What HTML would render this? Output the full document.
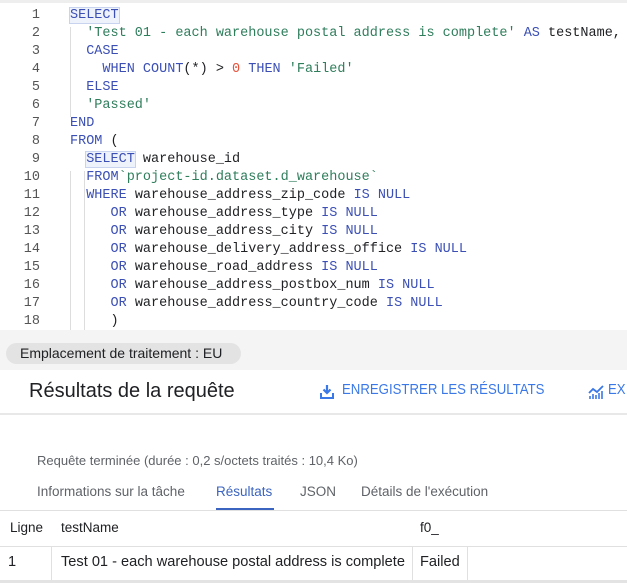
<!DOCTYPE html>
<html><head><meta charset="utf-8"><style>
*{margin:0;padding:0;box-sizing:border-box}
body{width:627px;height:583px;overflow:hidden;background:#fff;font-family:"Liberation Sans",sans-serif;position:relative}
.code{position:absolute;left:0;top:0;width:627px;height:330px;background:#fff;border-top:3px solid #eee}
.ln{position:absolute;left:0;width:40px;text-align:right;font:13.5px "Liberation Mono",monospace;color:#555}
.cl{position:absolute;left:70px;font:13.5px "Liberation Mono",monospace;color:#202124;white-space:pre}
.k{color:#3b4fb5}.s{color:#2e7d5b}.n{color:#e8513a}
.g{position:absolute;width:1px;background:#ddd}
.band{position:absolute;left:0;top:330px;width:627px;height:40px;background:#f4f4f5}
.chip{position:absolute;left:6px;top:343px;width:235px;height:21px;background:#e3e3e3;border-radius:11px;font-size:14px;color:#202124;padding:2px 0 0 14px}
.hdr{position:absolute;left:0;top:370px;width:627px;height:45px;border-bottom:2px solid #e8e8e8;background:#fff}
.sx{transform-origin:left center;white-space:nowrap}
#c{position:absolute;left:0;top:3px;width:627px;height:330px}
</style></head><body>
<div class="code">
<div class="g" style="left:70px;top:24px;height:90px"></div>
<div class="g" style="left:84px;top:168px;height:160px"></div>
<div class="g" style="left:70px;top:168px;height:160px"></div>
</div>
<div id="c">
<div class="ln" style="top:5px">1</div><div class="cl" style="top:5px"><span class="k" style="background:#eef2fb;outline:1px solid #c8d4ef">SELECT</span></div>
<div class="ln" style="top:23px">2</div><div class="cl" style="top:23px">  <span class="s">'Test 01 - each warehouse postal address is complete'</span> <span class="k">AS</span> testName,</div>
<div class="ln" style="top:41px">3</div><div class="cl" style="top:41px">  <span class="k">CASE</span></div>
<div class="ln" style="top:59px">4</div><div class="cl" style="top:59px">    <span class="k">WHEN COUNT</span>(*) &gt; <span class="n">0</span> <span class="k">THEN</span> <span class="s">'Failed'</span></div>
<div class="ln" style="top:77px">5</div><div class="cl" style="top:77px">  <span class="k">ELSE</span></div>
<div class="ln" style="top:95px">6</div><div class="cl" style="top:95px">  <span class="s">'Passed'</span></div>
<div class="ln" style="top:113px">7</div><div class="cl" style="top:113px"><span class="k">END</span></div>
<div class="ln" style="top:131px">8</div><div class="cl" style="top:131px"><span class="k">FROM</span> (</div>
<div class="ln" style="top:149px">9</div><div class="cl" style="top:149px">  <span class="k" style="outline:1px solid #c8d4ef;background:#eef2fb">SELECT</span> warehouse_id</div>
<div class="ln" style="top:167px">10</div><div class="cl" style="top:167px">  <span class="k">FROM</span><span class="s">`project-id.dataset.d_warehouse`</span></div>
<div class="ln" style="top:185px">11</div><div class="cl" style="top:185px">  <span class="k">WHERE</span> warehouse_address_zip_code <span class="k">IS NULL</span></div>
<div class="ln" style="top:203px">12</div><div class="cl" style="top:203px">     <span class="k">OR</span> warehouse_address_type <span class="k">IS NULL</span></div>
<div class="ln" style="top:221px">13</div><div class="cl" style="top:221px">     <span class="k">OR</span> warehouse_address_city <span class="k">IS NULL</span></div>
<div class="ln" style="top:239px">14</div><div class="cl" style="top:239px">     <span class="k">OR</span> warehouse_delivery_address_office <span class="k">IS NULL</span></div>
<div class="ln" style="top:257px">15</div><div class="cl" style="top:257px">     <span class="k">OR</span> warehouse_road_address <span class="k">IS NULL</span></div>
<div class="ln" style="top:275px">16</div><div class="cl" style="top:275px">     <span class="k">OR</span> warehouse_address_postbox_num <span class="k">IS NULL</span></div>
<div class="ln" style="top:293px">17</div><div class="cl" style="top:293px">     <span class="k">OR</span> warehouse_address_country_code <span class="k">IS NULL</span></div>
<div class="ln" style="top:311px">18</div><div class="cl" style="top:311px">     )</div>
</div>
<div class="band"></div>
<div class="chip">Emplacement de traitement : EU</div>
<div class="hdr">
<div style="position:absolute;left:29px;top:10px;font-size:20px;color:#202124">Résultats de la requête</div>
<svg style="position:absolute;left:320px;top:14px" width="14" height="15" viewBox="0 0 14 15"><path d="M7 1v8M3.5 5.5L7 9l3.5-3.5" stroke="#3b78e7" stroke-width="2.2" fill="none"/><path d="M1 9v5h12V9" stroke="#3b78e7" stroke-width="2" fill="none"/></svg>
<div class="sx" style="position:absolute;left:342px;top:11px;font-size:15px;color:#3b78e7;transform:scaleX(0.88)">ENREGISTRER LES RÉSULTATS</div>
<svg style="position:absolute;left:588px;top:15px" width="17" height="15" viewBox="0 0 17 15"><path d="M1 8l4-4 4 3 6-6" stroke="#3b78e7" stroke-width="1.8" fill="none"/><path d="M2 14v-3M5 14v-5M8 14v-4M11 14v-6M14 14v-8" stroke="#3b78e7" stroke-width="1.6"/></svg>
<div class="sx" style="position:absolute;left:608px;top:11px;font-size:15px;color:#3b78e7;transform:scaleX(0.88)">EX</div>
</div>
<div style="position:absolute;left:37px;top:453px;font-size:13px;color:#5f6368">Requête terminée (durée : 0,2 s/octets traités : 10,4 Ko)</div>
<div style="position:absolute;left:37px;top:484px;font-size:13.5px;color:#5f6368">Informations sur la tâche</div>
<div style="position:absolute;left:216px;top:484px;font-size:13.5px;color:#3b64c0">Résultats</div>
<div style="position:absolute;left:216px;top:508px;width:58px;height:2px;background:#3b64c0"></div>
<div style="position:absolute;left:300px;top:484px;font-size:13.5px;color:#5f6368">JSON</div>
<div style="position:absolute;left:361px;top:484px;font-size:13.5px;color:#5f6368">Détails de l'exécution</div>
<div style="position:absolute;left:0;top:510px;width:627px;height:1px;background:#e0e0e0"></div>
<div style="position:absolute;left:10px;top:520px;font-size:13.5px;color:#202124">Ligne</div>
<div style="position:absolute;left:61px;top:520px;font-size:13.5px;color:#202124">testName</div>
<div style="position:absolute;left:420px;top:520px;font-size:13.5px;color:#202124">f0_</div>
<div style="position:absolute;left:0;top:546px;width:627px;height:1px;background:#e0e0e0"></div>
<div style="position:absolute;left:51px;top:546px;width:1px;height:34px;background:#e0e0e0"></div>
<div style="position:absolute;left:412px;top:546px;width:1px;height:34px;background:#e0e0e0"></div>
<div style="position:absolute;left:467px;top:546px;width:1px;height:34px;background:#e0e0e0"></div>
<div style="position:absolute;left:8px;top:554px;font-size:14.6px;color:#202124">1</div>
<div style="position:absolute;left:61px;top:554px;font-size:14.6px;color:#202124">Test 01 - each warehouse postal address is complete</div>
<div style="position:absolute;left:420px;top:554px;font-size:14.6px;color:#202124">Failed</div>
<div style="position:absolute;left:0;top:580px;width:627px;height:3px;background:#e3e3e3"></div>
</body></html>
